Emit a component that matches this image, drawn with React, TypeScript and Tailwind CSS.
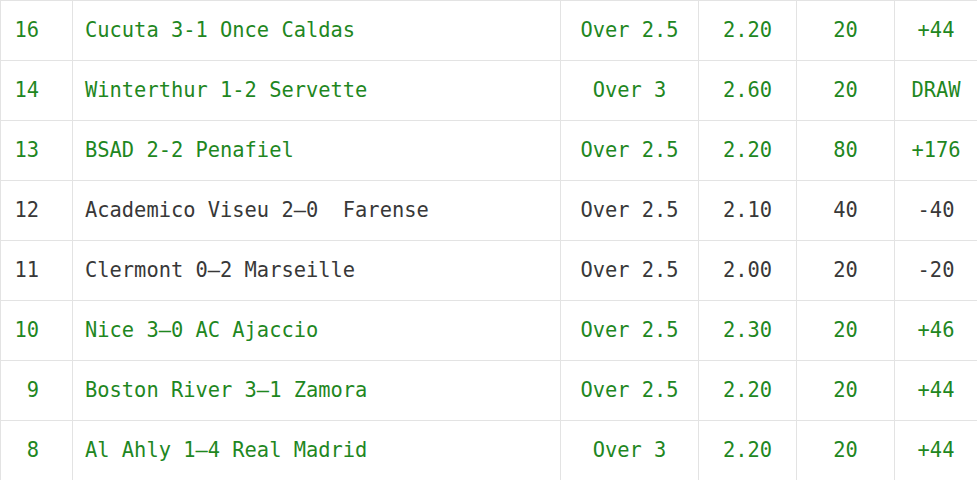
import React from 'react';

type Row = {
  id: number;
  match: string;
  pick: string;
  odds: string;
  stake: string;
  result: string;
  win: boolean;
};

const rows: Row[] = [
  { id: 16, match: 'Cucuta 3-1 Once Caldas', pick: 'Over 2.5', odds: '2.20', stake: '20', result: '+44', win: true },
  { id: 14, match: 'Winterthur 1-2 Servette', pick: 'Over 3', odds: '2.60', stake: '20', result: 'DRAW', win: true },
  { id: 13, match: 'BSAD 2-2 Penafiel', pick: 'Over 2.5', odds: '2.20', stake: '80', result: '+176', win: true },
  { id: 12, match: 'Academico Viseu 2\u20130\u00a0 Farense', pick: 'Over 2.5', odds: '2.10', stake: '40', result: '-40', win: false },
  { id: 11, match: 'Clermont 0\u20132 Marseille', pick: 'Over 2.5', odds: '2.00', stake: '20', result: '-20', win: false },
  { id: 10, match: 'Nice 3\u20130 AC Ajaccio', pick: 'Over 2.5', odds: '2.30', stake: '20', result: '+46', win: true },
  { id: 9, match: 'Boston River 3\u20131 Zamora', pick: 'Over 2.5', odds: '2.20', stake: '20', result: '+44', win: true },
  { id: 8, match: 'Al Ahly 1\u20134 Real Madrid', pick: 'Over 3', odds: '2.20', stake: '20', result: '+44', win: true },
];

export default function App() {
  return (
    <div className="w-[977px] h-[480px] overflow-hidden bg-white">
      <table
        className="w-[978px] border-collapse text-[20.4px] leading-none"
        style={{ fontFamily: '"DejaVu Sans Mono", "Liberation Mono", monospace' }}
      >
        <tbody>
          {rows.map((r) => {
            const color = r.win ? 'text-[#1f871f]' : 'text-[#383838]';
            const cell = 'h-[60px] border border-[#e3e3e3] p-0 pb-[1px] text-center';
            return (
              <tr key={r.id} className={color}>
                <td className={`${cell} w-[72px] text-right pr-[33px]`}>{r.id}</td>
                <td className={`${cell} w-[488px] text-left pl-[12px]`}>{r.match}</td>
                <td className={`${cell} w-[138px]`}>{r.pick}</td>
                <td className={`${cell} w-[98px]`}>{r.odds}</td>
                <td className={`${cell} w-[98px]`}>{r.stake}</td>
                <td className={`${cell}`}>{r.result}</td>
              </tr>
            );
          })}
        </tbody>
      </table>
    </div>
  );
}
